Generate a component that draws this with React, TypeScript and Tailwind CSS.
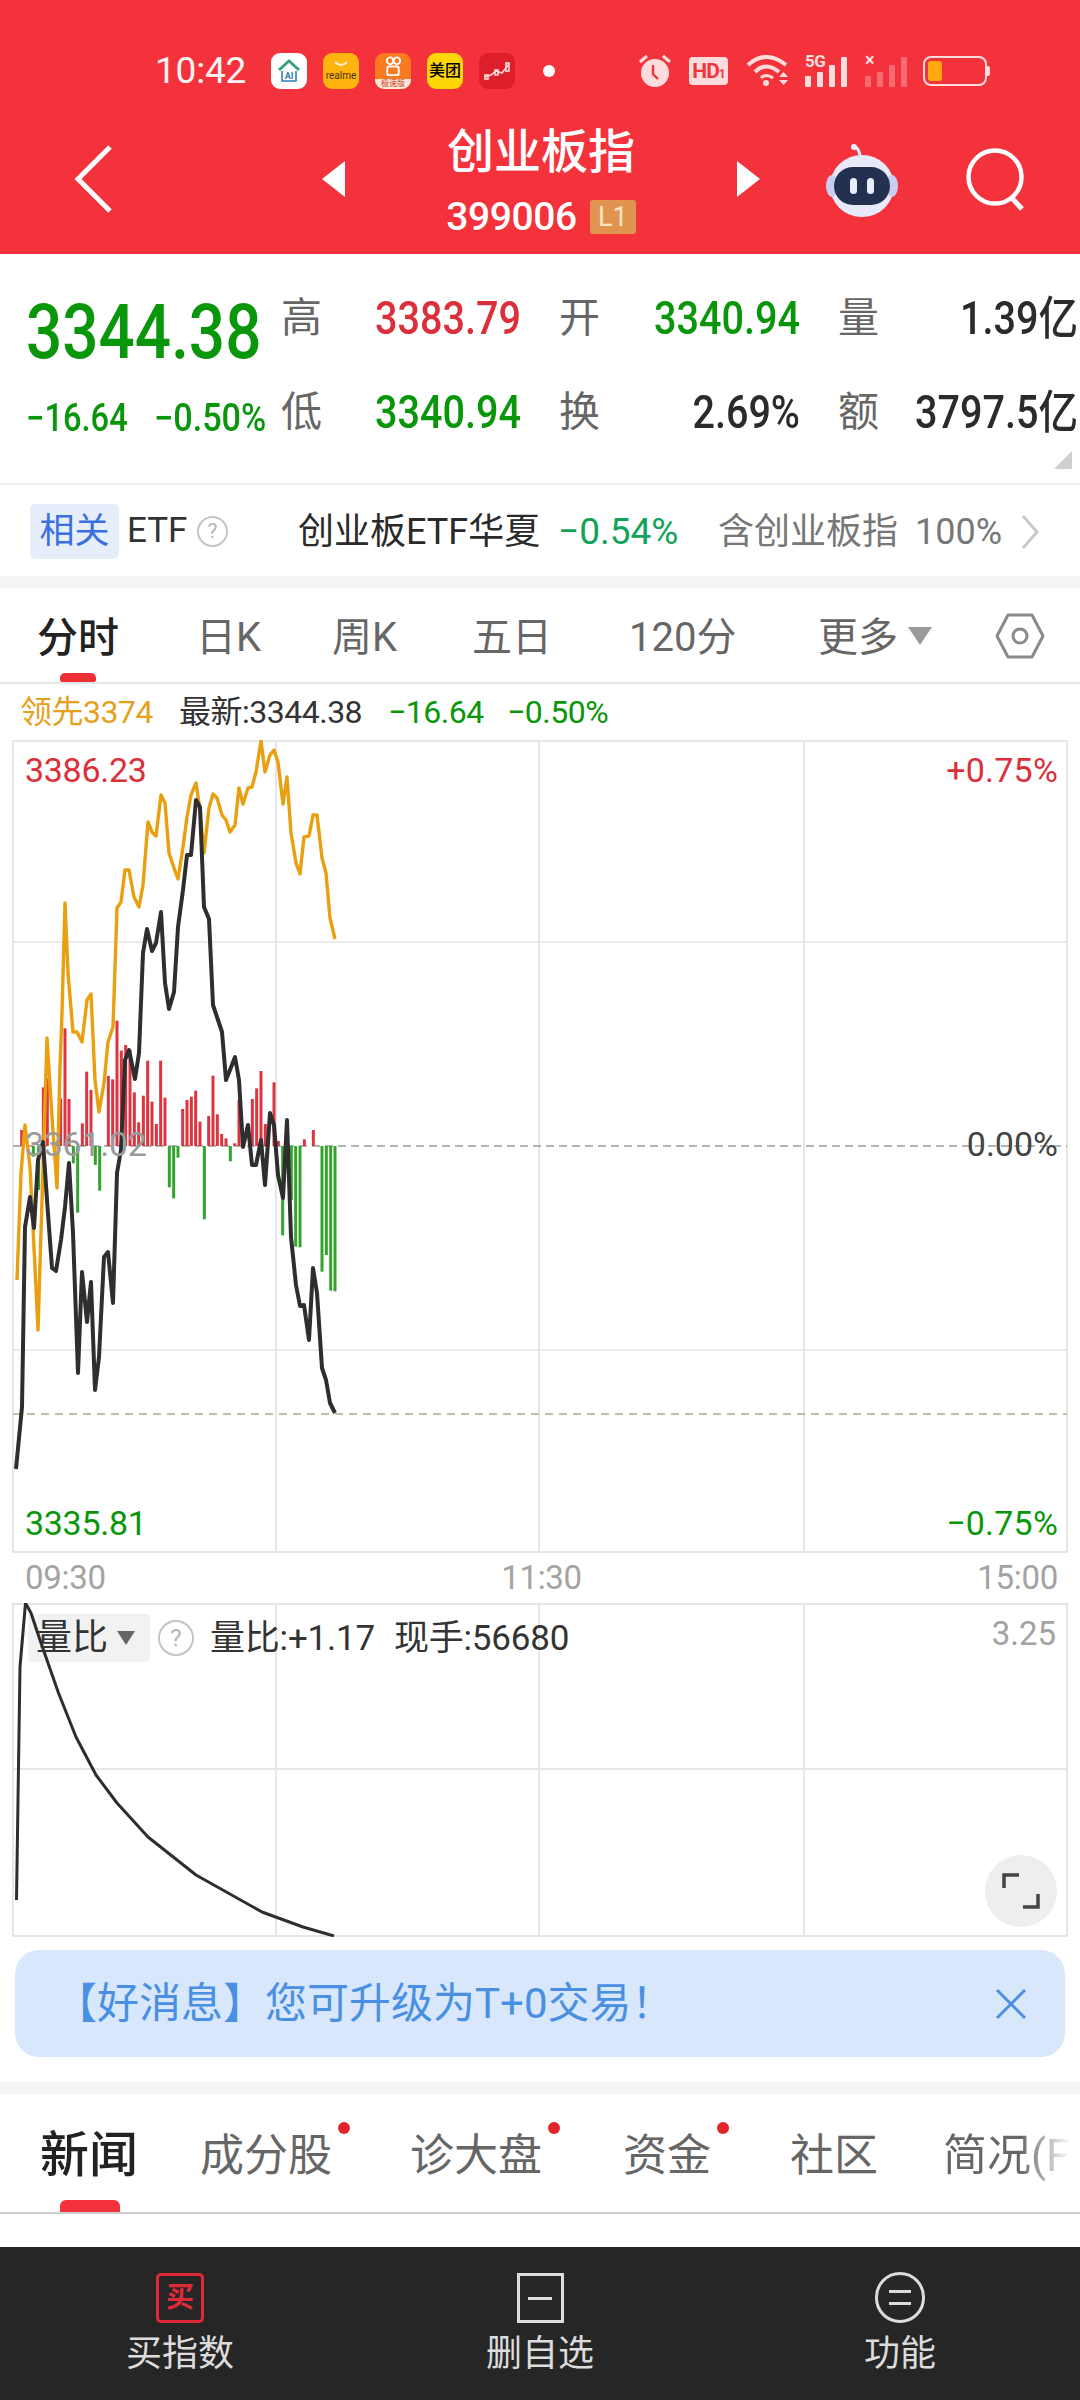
import React from 'react'

const FONT = { fontFamily: 'Roboto, "Noto Sans CJK SC", sans-serif' }

// 分时线 (page coordinates minus chart origin are applied at render)
const leadLine = [
  [17,1280],[21,1173],[25,1125],[30,1167],[33,1227],[38,1330],[42,1200],[47,1038],[52,1117],[57,1188],[60,1067],[62,1013],
  [65,903],[68,973],[73,1032],[77,1032],[82,1042],[87,1000],[91,994],[95,1080],[99,1112],[104,1083],[108,1042],[113,1027],
  [117,908],[121,902],[125,870],[129,870],[134,897],[139,907],[143,885],[148,822],[152,832],[156,836],[161,795],[165,803],
  [169,853],[174,868],[178,879],[183,847],[187,817],[191,795],[196,783],[200,810],[204,853],[209,808],[213,794],[217,798],
  [222,815],[226,820],[230,832],[235,825],[239,788],[243,804],[248,788],[252,787],[256,772],[261,741],[265,772],[270,755],
  [274,750],[278,762],[283,804],[287,777],[291,833],[296,863],[300,874],[304,837],[309,836],[313,815],[317,815],[322,858],
  [326,873],[330,918],[335,939],
]
const priceLine = [
  [16,1469],[22,1407],[25,1227],[30,1197],[34,1228],[38,1160],[43,1142],[47,1200],[52,1268],[56,1271],[61,1240],[65,1207],
  [69,1163],[73,1233],[78,1373],[82,1272],[87,1322],[91,1282],[95,1390],[99,1357],[104,1257],[108,1252],[113,1303],[117,1173],
  [121,1150],[125,1060],[129,1050],[135,1079],[139,1053],[143,953],[147,929],[152,951],[156,943],[161,912],[165,983],[169,1009],
  [174,992],[178,927],[183,890],[187,855],[191,855],[196,800],[200,807],[204,907],[209,919],[213,1005],[217,1017],[222,1032],
  [226,1080],[230,1070],[235,1057],[239,1080],[243,1147],[248,1125],[252,1165],[256,1165],[261,1140],[265,1185],[270,1113],
  [274,1125],[278,1175],[283,1198],[287,1120],[291,1237],[296,1285],[300,1306],[304,1305],[309,1340],[313,1268],[317,1293],
  [322,1368],[326,1380],[330,1403],[335,1413],
]
const redBars = [
  [65,390],[130,262],[142,235],[182,295],[195,85],[207,297],[247,370],[260,215],[273,270],[325,228],[338,238],[351,62],[364,152],
  [377,135],[390,150],[403,277],[416,367],[430,287],[443,182],[456,305],[469,372],[482,182],[495,293],[548,327],[561,300],[574,290],
  [587,272],[600,365],[626,348],[639,227],[652,343],[665,402],[678,415],[704,430],[717,300],[730,400],[757,297],[770,265],[783,213],
  [796,372],[822,247],[835,423],[913,418],[940,390],
]
const greenBars = [
  [100,470],[116,570],[220,490],[233,638],[286,495],[299,572],[508,562],[521,595],[534,473],[613,658],[691,484],[848,706],[861,480],
  [874,600],[887,740],[900,742],[966,815],[979,765],[992,872],[1005,874],
]
const ratioLine = [
  [16.5,1900],[20,1667],[25.5,1603],[31,1613],[40,1640],[48,1663],[58.5,1693],[76,1737],[96,1775],[117,1803],[148,1837],[196,1875],
  [262,1912],[303,1927],[334,1936],
]

const toPath = (pts: number[][], top: number) => pts.map(([x, y]) => `${x},${y - top}`).join(' ')

function AppIcons() {
  return (
    <div className="flex items-center gap-[16px] ml-[25px]">
      <div className="w-[36px] h-[36px] rounded-[9px] bg-white flex items-center justify-center">
        <svg width="26" height="26" viewBox="0 0 26 26" fill="none">
          <path d="M3 12 L13 3 L23 12" stroke="#3aa27a" strokeWidth="3" />
          <path d="M6 13 V23 H20 V13" stroke="#2f7fb5" strokeWidth="1.6" />
          <text x="13" y="21" textAnchor="middle" fontSize="9" fontWeight="700" fill="#2f7fb5">AI</text>
        </svg>
      </div>
      <div className="w-[36px] h-[36px] rounded-[9px] bg-[#ffb30f] flex flex-col items-center justify-center">
        <svg width="16" height="7" viewBox="0 0 16 7" fill="none" className="mb-[2px]">
          <path d="M2 1 Q8 7 14 1" stroke="#fff3c8" strokeWidth="2" />
        </svg>
        <span className="text-[10px] leading-[11px] text-[#4a3200]">realme</span>
      </div>
      <div className="w-[36px] h-[36px] rounded-[9px] bg-[#f97a1f] overflow-hidden flex flex-col items-center">
        <svg width="20" height="25" viewBox="0 0 20 25" fill="none" className="mt-[2px]">
          <circle cx="7" cy="6" r="3.5" stroke="#fff" strokeWidth="2" />
          <circle cx="14" cy="6" r="3.5" stroke="#fff" strokeWidth="2" />
          <rect x="4" y="12" width="12" height="9" rx="2" stroke="#fff" strokeWidth="2" />
        </svg>
        <div className="w-full h-[10px] bg-[#fde8d8] text-[8px] leading-[10px] text-center text-[#c8401a]">极速版</div>
      </div>
      <div className="w-[36px] h-[36px] rounded-[9px] bg-[#ffd60a] flex items-center justify-center text-[16px] leading-[36px] text-black font-medium">美团</div>
      <div className="w-[36px] h-[36px] rounded-[9px] bg-[#dc1f2b] flex items-center justify-center">
        <svg width="30" height="22" viewBox="0 0 30 22" fill="none" stroke="#ffd9d9" strokeWidth="1.6">
          <path d="M2 17 L9 15 L14 11 L20 13 L27 4" />
          <rect x="3" y="15" width="3" height="4" />
          <rect x="13" y="10" width="3" height="5" />
          <rect x="24" y="3" width="3" height="8" />
        </svg>
      </div>
      <div className="w-[12px] h-[12px] rounded-full bg-white ml-[12px]" />
    </div>
  )
}

function StatusIcons() {
  return (
    <div className="flex items-center ml-[83px]">
      <svg width="34" height="34" viewBox="0 0 34 34" fill="none">
        <path d="M2 8 L9 2 M32 8 L25 2" stroke="#ffdcdc" strokeWidth="3" />
        <circle cx="17" cy="19" r="14" fill="#ffdcdc" />
        <path d="M15 11 V20 L20 25" stroke="#f4323c" strokeWidth="2.4" />
      </svg>
      <div className="ml-[17px] w-[39px] h-[28px] rounded-[4px] bg-[#ffdcdc] flex items-center justify-center text-[#f4323c] text-[21px] leading-[28px] font-bold tracking-[-1px]">HD<span className="text-[12px] mt-[6px]">1</span></div>
      <svg width="46" height="32" viewBox="0 0 46 32" fill="none" className="ml-[18px]">
        <path d="M2 10 Q20 -6 40 10" stroke="#ffdcdc" strokeWidth="4" />
        <path d="M9 17 Q20 6 33 17" stroke="#ffdcdc" strokeWidth="4" />
        <path d="M15 23 Q20 18 27 23" stroke="#ffdcdc" strokeWidth="3" />
        <circle cx="20" cy="28" r="3" fill="#ffdcdc" />
        <path d="M33 22 L37.5 17 L42 22 Z M33 25 L37.5 30 L42 25 Z" fill="#ffdcdc" />
      </svg>
      <div className="relative ml-[13px] w-[48px] h-[32px]">
        <span className="absolute left-0 top-[-3px] text-[17px] leading-[18px] font-bold text-[#ffdcdc] tracking-[-0.5px]">5G</span>
        <div className="absolute left-0 bottom-0 flex items-end gap-[6px]">
          <div className="w-[6px] h-[11px] rounded-[1px] bg-[#ffdcdc]" />
          <div className="w-[6px] h-[15px] rounded-[1px] bg-[#ffdcdc]" />
          <div className="w-[6px] h-[22px] rounded-[1px] bg-[#ffdcdc]" />
          <div className="w-[6px] h-[30px] rounded-[1px] bg-[#ffdcdc]" />
        </div>
      </div>
      <div className="relative ml-[12px] w-[44px] h-[32px]">
        <span className="absolute left-0 top-[-5px] text-[18px] leading-[20px] font-bold text-[#ffdcdc]">×</span>
        <div className="absolute left-0 bottom-0 flex items-end gap-[6px]">
          <div className="w-[6px] h-[11px] rounded-[1px] bg-[#f86a72]" />
          <div className="w-[6px] h-[15px] rounded-[1px] bg-[#f86a72]" />
          <div className="w-[6px] h-[22px] rounded-[1px] bg-[#f86a72]" />
          <div className="w-[6px] h-[30px] rounded-[1px] bg-[#f86a72]" />
        </div>
      </div>
      <div className="ml-[14px] flex items-center">
        <div className="w-[64px] h-[30px] rounded-[8px] border-2 border-[#ffdcdc] p-[3px]">
          <div className="w-[14px] h-full rounded-[3px] bg-[#ffa90f]" />
        </div>
        <div className="w-[3px] h-[10px] bg-[#ffdcdc] rounded-r-[2px]" />
      </div>
    </div>
  )
}

function Header() {
  return (
    <div className="h-[254px] bg-[#f4323c] text-white flex flex-col shrink-0">
      <div className="h-[48px] mt-[47px] flex items-center pl-[155px]">
        <span className="text-[37px] leading-[48px] w-[91px] text-[#fff5f5] tracking-[-0.2px]">10:42</span>
        <AppIcons />
        <StatusIcons />
      </div>
      <div className="flex h-[159px] items-start pt-[31px]">
        <svg width="44" height="70" viewBox="0 0 44 70" fill="none" className="ml-[72px] mt-[18px]">
          <path d="M38 3 L6 35 L38 67" stroke="#fff" strokeWidth="5" />
        </svg>
        <svg width="24" height="36" viewBox="0 0 24 36" className="ml-[206px] mt-[35px]">
          <path d="M23 0 V36 L0 18 Z" fill="#fff" />
        </svg>
        <div className="w-[390px] flex flex-col items-center -mt-[5px]">
          <div className="text-[47px] leading-[62px] font-medium">创业板指</div>
          <div className="flex items-center mt-[13px]">
            <span className="text-[39px] leading-[42px] font-medium tracking-[-0.4px]">399006</span>
            <span className="ml-[13px] w-[46px] h-[34px] rounded-[3px] bg-[#e0944f] text-[#fbe3c6] text-[27px] leading-[34px] text-center">L1</span>
          </div>
        </div>
        <svg width="24" height="36" viewBox="0 0 24 36" className="mt-[35px]">
          <path d="M1 0 V36 L24 18 Z" fill="#fff" />
        </svg>
        <svg width="74" height="76" viewBox="0 0 74 76" fill="none" className="ml-[65px] mt-[17px]">
          <path d="M35 12 Q33 3 29 5" stroke="#eef0ff" strokeWidth="3" />
          <circle cx="29" cy="4" r="3" fill="#eef0ff" />
          <ellipse cx="37" cy="43" rx="32" ry="31" fill="#e8e9fb" />
          <ellipse cx="7" cy="43" rx="6" ry="11" fill="#c9cdf2" />
          <ellipse cx="67" cy="43" rx="6" ry="11" fill="#c9cdf2" />
          <rect x="9" y="24" width="56" height="38" rx="19" fill="#24304f" />
          <rect x="25" y="35" width="7" height="16" rx="3.5" fill="#e9eefc" />
          <rect x="42" y="35" width="7" height="16" rx="3.5" fill="#e9eefc" />
        </svg>
        <svg width="64" height="64" viewBox="0 0 64 64" fill="none" className="ml-[65px] mt-[21px]">
          <circle cx="31" cy="30" r="26.5" stroke="#fff" strokeWidth="4.5" />
          <path d="M47 50 L58 62" stroke="#fff" strokeWidth="5" />
        </svg>
      </div>
    </div>
  )
}

function Label({ children }: { children: React.ReactNode }) {
  return <div className="text-[41px] leading-[94px] text-[#666]">{children}</div>
}

function Value({ children, color }: { children: React.ReactNode; color: string }) {
  return (
    <div className={`text-[46px] leading-[96px] font-medium text-right origin-right scale-x-[0.86] ${color}`}>{children}</div>
  )
}

function Quote() {
  return (
    <div className="h-[231px] relative flex shrink-0 pt-[17px] border-b-2 border-[#ececec]">
      <div className="w-[281px] pl-[26px] shrink-0">
        <div className="text-[76px] leading-[86px] mt-[18px] font-medium origin-left scale-x-[0.84] text-[#0a960a] whitespace-nowrap">3344.38</div>
        <div className="flex mt-[21px] text-[38px] leading-[44px] font-medium text-[#0a960a]">
          <span className="w-[128px] origin-left scale-x-[0.86]">−16.64</span>
          <span className="origin-left scale-x-[0.9] whitespace-nowrap">−0.50%</span>
        </div>
      </div>
      <div className="grid grid-cols-[41px_199px_38px_41px_200px_38px_41px_199px] auto-rows-[94px] items-center">
        <Label>高</Label>
        <Value color="text-[#dc2f3a]">3383.79</Value>
        <div />
        <Label>开</Label>
        <Value color="text-[#0a960a]">3340.94</Value>
        <div />
        <Label>量</Label>
        <Value color="text-[#2b2b2b]">1.39亿</Value>
        <Label>低</Label>
        <Value color="text-[#0a960a]">3340.94</Value>
        <div />
        <Label>换</Label>
        <Value color="text-[#2b2b2b]">2.69%</Value>
        <div />
        <Label>额</Label>
        <Value color="text-[#2b2b2b]">3797.5亿</Value>
      </div>
      <svg width="18" height="18" viewBox="0 0 18 18" className="absolute right-[8px] bottom-[14px]">
        <path d="M18 0 V18 H0 Z" fill="#cfcfcf" />
      </svg>
    </div>
  )
}

function EtfRow() {
  return (
    <div className="h-[91px] flex items-center shrink-0 pl-[30px] pt-[2px]">
      <div className="w-[89px] h-[55px] rounded-[5px] bg-[#e6eefc] text-[#3a70e2] text-[35px] leading-[55px] text-center">相关</div>
      <span className="ml-[8px] text-[35px] text-[#333] w-[62px]">ETF</span>
      <div className="ml-[8px] w-[31px] h-[31px] rounded-full border-2 border-[#c4c4c4] text-[#b5b5b5] text-[21px] leading-[27px] text-center">?</div>
      <span className="ml-[70px] text-[36px] w-[240px] whitespace-nowrap text-[#2a2a2a]">创业板ETF华夏</span>
      <span className="ml-[20px] text-[37px] w-[125px] text-[#12a35a]">−0.54%</span>
      <span className="ml-[35px] text-[36px] w-[180px] text-[#777] whitespace-nowrap">含创业板指</span>
      <span className="ml-[17px] text-[36px] text-[#777]">100%</span>
      <svg width="20" height="36" viewBox="0 0 20 36" fill="none" className="ml-[18px]">
        <path d="M3 2 L17 18 L3 34" stroke="#c8c8c8" strokeWidth="3" />
      </svg>
    </div>
  )
}

function ChartTabs() {
  return (
    <div className="h-[96px] relative flex items-start pt-[25px] pl-[37px] text-[40px] leading-[50px] text-[#666] border-b-2 border-[#e6e6e6] shrink-0 whitespace-nowrap">
      <span className="w-[82px] text-[41px] font-medium text-[#222]">分时</span>
      <span className="ml-[77px] w-[66px]">日K</span>
      <span className="ml-[70px] w-[68px]">周K</span>
      <span className="ml-[72px] w-[78px]">五日</span>
      <span className="ml-[79px] w-[112px]">120分</span>
      <span className="ml-[77px] w-[82px]">更多</span>
      <svg width="24" height="18" viewBox="0 0 24 18" className="ml-[8px] mt-[14px]">
        <path d="M0 0 H24 L12 18 Z" fill="#9a9a9a" />
      </svg>
      <svg width="50" height="46" viewBox="0 0 50 46" fill="none" className="ml-[63px]">
        <path d="M13 2 H37 L48 23 L37 44 H13 L2 23 Z" stroke="#8a8a8a" strokeWidth="3" strokeLinejoin="round" />
        <circle cx="25" cy="23" r="7" stroke="#8a8a8a" strokeWidth="3" />
      </svg>
      <div className="absolute left-[60px] bottom-0 w-[36px] h-[9px] rounded-t-[5px] rounded-b-[2px] bg-[#ee2f36]" />
    </div>
  )
}

function Legend() {
  return (
    <div className="h-[56px] flex items-center pl-[20px] text-[32px] shrink-0 tracking-[-0.5px]">
      <span className="w-[134px] whitespace-nowrap text-[#e6a11a]">领先3374</span>
      <span className="ml-[25px] w-[183px] whitespace-nowrap text-[#333]">最新:3344.38</span>
      <span className="ml-[26px] w-[93px] text-[#0a960a]">−16.64</span>
      <span className="ml-[26px] text-[#0a960a]">−0.50%</span>
    </div>
  )
}

function MainChart() {
  const top = 740
  return (
    <div className="h-[813px] relative shrink-0">
      <svg width="1080" height="813" viewBox="0 0 1080 813" fill="none" className="block">
        <g stroke="#e6e6e6" strokeWidth="2">
          <rect x="13" y="1" width="1054" height="811" />
          <path d="M276 0 V813 M539 0 V813 M804 0 V813" />
        </g>
        <path d="M13 202 H1067 M13 610 H1067" stroke="#e6e6e6" strokeWidth="1.5" />
        <path d="M13 406 H1067" stroke="#9a9a9a" strokeWidth="1.5" strokeDasharray="8 5" />
        <path d="M13 674 H1067" stroke="#b5a884" strokeWidth="1.5" strokeDasharray="8 6" />
        {redBars.map(([x, v]) => (
          <rect key={x} x={x / 3 - 1.5} y={1000 + v / 3 - top} width="3" height={1146 - (1000 + v / 3)} fill="#dc3540" />
        ))}
        {greenBars.map(([x, v]) => (
          <rect key={x} x={x / 3 - 1.5} y={406} width="3" height={1000 + v / 3 - 1146} fill="#37a32f" />
        ))}
        <polyline points={toPath(leadLine, top)} stroke="#e8a010" strokeWidth="3.4" strokeLinejoin="round" />
        <polyline points={toPath(priceLine, top)} stroke="#2e2e2e" strokeWidth="4" strokeLinejoin="round" />
      </svg>
      <span className="absolute left-[25px] top-[8px] text-[34px] leading-[44px] tracking-[-0.3px] text-[#dc2f3a]">3386.23</span>
      <span className="absolute right-[22px] top-[8px] text-[34px] leading-[44px] tracking-[0.2px] text-[#dc2f3a]">+0.75%</span>
      <span className="absolute left-[25px] top-[382px] text-[34px] leading-[44px] tracking-[-0.3px] text-[#9b9b9b]">3361.02</span>
      <span className="absolute right-[22px] top-[382px] text-[34px] leading-[44px] text-[#444]">0.00%</span>
      <span className="absolute left-[25px] top-[761px] text-[34px] leading-[44px] tracking-[-0.3px] text-[#0a960a]">3335.81</span>
      <span className="absolute right-[22px] top-[761px] text-[34px] leading-[44px] tracking-[0.2px] text-[#0a960a]">−0.75%</span>
    </div>
  )
}

function SubChart() {
  const top = 1603
  return (
    <div className="h-[334px] relative shrink-0">
      <svg width="1080" height="334" viewBox="0 0 1080 334" fill="none" className="block">
        <g stroke="#e6e6e6" strokeWidth="2">
          <rect x="13" y="1" width="1054" height="332" />
          <path d="M276 0 V334 M539 0 V334 M804 0 V334" />
        </g>
        <path d="M13 166 H1067" stroke="#e6e6e6" strokeWidth="2" />
        <polyline points={toPath(ratioLine, top)} stroke="#2e2e2e" strokeWidth="3" strokeLinejoin="round" />
      </svg>
      <div className="absolute left-[28px] top-[11px] w-[122px] h-[48px] rounded-[4px] bg-black/5 flex items-center pl-[8px] text-[36px] text-[#333]">
        量比
        <svg width="18" height="14" viewBox="0 0 18 14" className="ml-[9px]">
          <path d="M0 0 H18 L9 14 Z" fill="#666" />
        </svg>
      </div>
      <div className="absolute left-[158px] top-[17px] w-[36px] h-[36px] rounded-full border-2 border-[#c4c4c4] text-[#b5b5b5] text-[24px] leading-[32px] text-center">?</div>
      <div className="absolute left-[210px] top-[12px] text-[35px] leading-[48px] text-[#333] whitespace-nowrap tracking-[-0.2px]">
        量比:+1.17<span className="ml-[19px]">现手:56680</span>
      </div>
      <span className="absolute right-[24px] top-[9px] text-[33px] leading-[44px] text-[#a3a3a3]">3.25</span>
      <div className="absolute left-[985px] top-[252px] w-[72px] h-[72px] rounded-full bg-[#eeeeee] flex items-center justify-center">
        <svg width="38" height="38" viewBox="0 0 38 38" fill="none" stroke="#444" strokeWidth="3.5">
          <path d="M2 16 V3 H17" />
          <path d="M36 22 V35 H21" />
        </svg>
      </div>
    </div>
  )
}

function Banner() {
  return (
    <div className="mx-[15px] mt-[13px] h-[107px] rounded-[24px] bg-[#d8e7fb] flex items-center justify-between pl-[40px] pr-[38px] shrink-0">
      <span className="text-[42px] text-[#4a90e2] whitespace-nowrap">【好消息】您可升级为T+0交易！</span>
      <svg width="32" height="32" viewBox="0 0 32 32" fill="none" stroke="#4a90e2" strokeWidth="3">
        <path d="M2 2 L30 30 M30 2 L2 30" />
      </svg>
    </div>
  )
}

function NewsTabs() {
  return (
    <div className="h-[120px] relative overflow-hidden flex items-center pl-[40px] pt-[6px] border-b-2 border-[#cfcfcf] text-[44px] text-[#666] shrink-0 whitespace-nowrap">
      <span className="w-[98px] text-[49px] font-medium text-[#222]">新闻</span>
      <span className="relative ml-[62px] w-[133px]">
        成分股
        <span className="absolute left-[138px] top-[-1px] w-[12px] h-[12px] rounded-full bg-[#e3242b]" />
      </span>
      <span className="relative ml-[77px] w-[133px]">
        诊大盘
        <span className="absolute left-[138px] top-[-1px] w-[12px] h-[12px] rounded-full bg-[#e3242b]" />
      </span>
      <span className="relative ml-[80px] w-[87px]">
        资金
        <span className="absolute left-[94px] top-[-1px] w-[12px] h-[12px] rounded-full bg-[#e3242b]" />
      </span>
      <span className="ml-[80px] w-[87px]">社区</span>
      <span className="ml-[66px] bg-gradient-to-r from-[#666] from-60% to-white to-100% bg-clip-text text-transparent">简况(F</span>
      <div className="absolute left-[60px] bottom-0 w-[60px] h-[12px] rounded-t-[6px] bg-[#f4323c]" />
    </div>
  )
}

function BottomBar() {
  return (
    <div className="h-[153px] bg-[#262626] grid grid-cols-3 shrink-0 text-[36px] leading-[48px] text-[#dcdcdc]">
      <div className="flex flex-col items-center pt-[26px]">
        <div className="w-[48px] h-[50px] rounded-[5px] border-[3px] border-[#e02a37] text-[#e02a37] text-[28px] leading-[44px] font-bold text-center">买</div>
        <span className="mt-[7px]">买指数</span>
      </div>
      <div className="flex flex-col items-center pt-[26px]">
        <div className="w-[47px] h-[50px] border-[3px] border-[#dcdcdc] flex items-center justify-center">
          <div className="w-[24px] h-[3px] bg-[#dcdcdc]" />
        </div>
        <span className="mt-[7px]">删自选</span>
      </div>
      <div className="flex flex-col items-center pt-[25px]">
        <div className="w-[50px] h-[51px] rounded-full border-[3px] border-[#dcdcdc] flex flex-col items-center justify-center gap-[9px]">
          <div className="w-[22px] h-[3px] bg-[#dcdcdc]" />
          <div className="w-[22px] h-[3px] bg-[#dcdcdc]" />
        </div>
        <span className="mt-[7px]">功能</span>
      </div>
    </div>
  )
}

export default function App() {
  return (
    <div className="w-[1080px] h-[2400px] bg-white flex flex-col overflow-hidden" style={FONT}>
      <Header />
      <Quote />
      <EtfRow />
      <div className="h-[12px] bg-[#f4f4f4] shrink-0" />
      <ChartTabs />
      <Legend />
      <MainChart />
      <div className="h-[50px] flex items-center justify-between pl-[25px] pr-[22px] text-[33px] text-[#a3a3a3] shrink-0 tracking-[-0.3px]">
        <span>09:30</span>
        <span>11:30</span>
        <span>15:00</span>
      </div>
      <SubChart />
      <Banner />
      <div className="h-[25px] shrink-0" />
      <div className="h-[12px] bg-[#f4f4f4] shrink-0" />
      <NewsTabs />
      <div className="h-[33px] shrink-0" />
      <BottomBar />
    </div>
  )
}
